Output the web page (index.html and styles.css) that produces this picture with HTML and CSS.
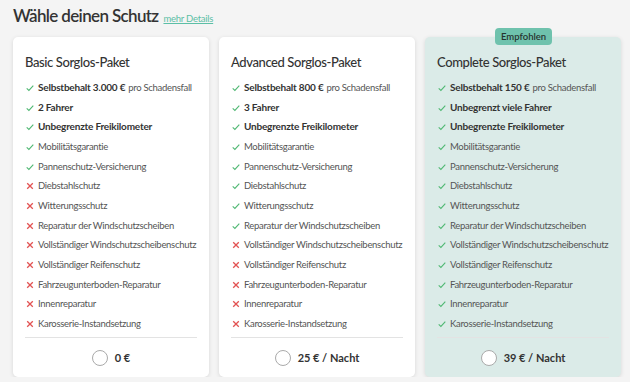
FILE: index.html
```html
<!DOCTYPE html>
<html lang="de">
<head>
<meta charset="utf-8">
<link rel="stylesheet" href="styles.css">
</head>
<body>
<div class="page">
  <div class="head">
    <h1>Wähle deinen Schutz</h1>
    <a class="more" href="#">mehr Details</a>
  </div>
  <div class="cards">
    <div class="card">
      <h2>Basic Sorglos-Paket</h2>
      <ul>
        <li class="y"><b>Selbstbehalt 3.000 €</b> pro Schadensfall</li>
        <li class="y"><b>2 Fahrer</b></li>
        <li class="y"><b>Unbegrenzte Freikilometer</b></li>
        <li class="y">Mobilitätsgarantie</li>
        <li class="y">Pannenschutz-Versicherung</li>
        <li class="n">Diebstahlschutz</li>
        <li class="n">Witterungsschutz</li>
        <li class="n">Reparatur der Windschutzscheiben</li>
        <li class="n">Vollständiger Windschutzscheibenschutz</li>
        <li class="n">Vollständiger Reifenschutz</li>
        <li class="n">Fahrzeugunterboden-Reparatur</li>
        <li class="n">Innenreparatur</li>
        <li class="n">Karosserie-Instandsetzung</li>
      </ul>
      <div class="price"><span class="radio"></span><b>0 €</b></div>
    </div>
    <div class="card">
      <h2>Advanced Sorglos-Paket</h2>
      <ul>
        <li class="y"><b>Selbstbehalt 800 €</b> pro Schadensfall</li>
        <li class="y"><b>3 Fahrer</b></li>
        <li class="y"><b>Unbegrenzte Freikilometer</b></li>
        <li class="y">Mobilitätsgarantie</li>
        <li class="y">Pannenschutz-Versicherung</li>
        <li class="y">Diebstahlschutz</li>
        <li class="y">Witterungsschutz</li>
        <li class="y">Reparatur der Windschutzscheiben</li>
        <li class="n">Vollständiger Windschutzscheibenschutz</li>
        <li class="n">Vollständiger Reifenschutz</li>
        <li class="n">Fahrzeugunterboden-Reparatur</li>
        <li class="n">Innenreparatur</li>
        <li class="n">Karosserie-Instandsetzung</li>
      </ul>
      <div class="price"><span class="radio"></span><b>25 € / Nacht</b></div>
    </div>
    <div class="card featured">
      <span class="badge">Empfohlen</span>
      <h2>Complete Sorglos-Paket</h2>
      <ul>
        <li class="y"><b>Selbstbehalt 150 €</b> pro Schadensfall</li>
        <li class="y"><b>Unbegrenzt viele Fahrer</b></li>
        <li class="y"><b>Unbegrenzte Freikilometer</b></li>
        <li class="y">Mobilitätsgarantie</li>
        <li class="y">Pannenschutz-Versicherung</li>
        <li class="y">Diebstahlschutz</li>
        <li class="y">Witterungsschutz</li>
        <li class="y">Reparatur der Windschutzscheiben</li>
        <li class="y">Vollständiger Windschutzscheibenschutz</li>
        <li class="y">Vollständiger Reifenschutz</li>
        <li class="y">Fahrzeugunterboden-Reparatur</li>
        <li class="y">Innenreparatur</li>
        <li class="y">Karosserie-Instandsetzung</li>
      </ul>
      <div class="price"><span class="radio"></span><b>39 € / Nacht</b></div>
    </div>
  </div>
</div>
</body>
</html>
```
FILE: styles.css
```css
* { box-sizing: border-box; }
html, body { margin: 0; padding: 0; }
body {
  background: #f4f4f4;
  font-family: Lato, "Open Sans", sans-serif;
  color: #3a3a3a;
}
.page { padding: 4px 8px 0 13px; }
.head { display: flex; align-items: baseline; gap: 5px; height: 33px; }
h1 { margin: 0; font-size: 17px; font-weight: 600; color: #333; line-height: 24px; letter-spacing: -0.65px; }
.more { font-size: 9.5px; color: #5cbfa6; text-decoration: underline; letter-spacing: -0.25px; }
.cards { display: grid; grid-template-columns: repeat(3, 196px); gap: 10px; }
.card {
  position: relative;
  background: #fff;
  border-radius: 5px;
  box-shadow: 0 1px 4px rgba(0,0,0,0.12);
  padding: 17px 12px 0 12px;
  height: 340px;
}
.card.featured { background: #dbebe8; }
.badge {
  position: absolute;
  top: -9px; left: 70px;
  background: #6fc2ad;
  color: #27332f;
  font-size: 9.5px; font-weight: 600;
  padding: 0 6px; height: 17px; line-height: 17px;
  border-radius: 4px;
}
h2 { margin: 0 0 7px; font-size: 13px; font-weight: 500; line-height: 17px; color: #333; letter-spacing: -0.4px; }
ul { list-style: none; margin: 0; padding: 0; border-bottom: 1px solid #e3e3e3; padding-bottom: 3px; }
li { font-size: 9.5px; line-height: 19.67px; color: #555; display: flex; align-items: center; white-space: nowrap; letter-spacing: -0.3px; }
li b { color: #333; margin-right: 3px; font-size: 10px; letter-spacing: -0.2px; }
li::before { content: ""; width: 8px; height: 8px; margin: 0 4px 0 1px; flex: none; background-repeat: no-repeat; background-size: 8px 8px; }
li.y::before { background-image: url("data:image/svg+xml,%3Csvg xmlns='http://www.w3.org/2000/svg' viewBox='0 0 8 8'%3E%3Cpath d='M0.7 4.3 L2.9 6.4 L7.3 1.6' fill='none' stroke='%2350b873' stroke-width='1.1'/%3E%3C/svg%3E"); }
li.n::before { background-image: url("data:image/svg+xml,%3Csvg xmlns='http://www.w3.org/2000/svg' viewBox='0 0 8 8'%3E%3Cpath d='M1.2 1.2 L6.8 6.8 M6.8 1.2 L1.2 6.8' fill='none' stroke='%23e25353' stroke-width='1.3'/%3E%3C/svg%3E"); }
.price { display: flex; justify-content: center; align-items: center; gap: 7px; height: 40px; font-size: 11px; color: #333; }
.radio { width: 16px; height: 16px; border-radius: 50%; border: 1.5px solid #aaa; background: #fff; }
```
